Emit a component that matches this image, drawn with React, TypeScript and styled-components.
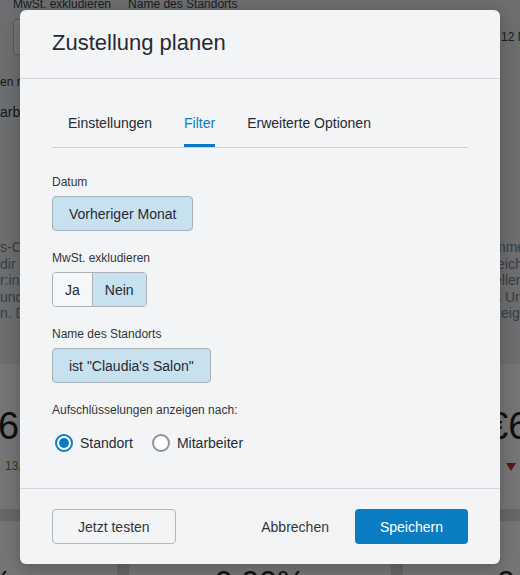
import React from "react";
import styled, { createGlobalStyle } from "styled-components";

const Global = createGlobalStyle`
  html, body { margin: 0; padding: 0; }
  body { font-family: "Liberation Sans", Arial, sans-serif; }
  * { box-sizing: border-box; }
`;

const Page = styled.div`
  position: relative;
  width: 520px;
  height: 575px;
  overflow: hidden;
  background: #dfe1e4;
  font-family: "Liberation Sans", Arial, sans-serif;
`;

const TopPanel = styled.div`
  background: #eef0f2;
  height: 365px;
  padding-top: 1px;
  margin-top: -1px;
`;

const FilterLabels = styled.div`
  display: flex;
  gap: 17px;
  padding-left: 13px;
  margin-top: -3px;
  font-size: 12px;
  line-height: 14px;
  color: #3e434a;
  white-space: nowrap;
`;

const FilterRow = styled.div`
  display: flex;
  justify-content: space-between;
  align-items: center;
  margin-top: 8px;
`;

const SelectBox = styled.div`
  width: 110px;
  height: 36px;
  margin-left: 13px;
  background: #fff;
  border: 1px solid #c2c6cb;
  border-radius: 4px;
`;

const SideNote = styled.div`
  width: 19px;
  white-space: nowrap;
  font-size: 12px;
  color: #3e434a;
`;

const SmallLine = styled.div<{ $mt: number; $size: number }>`
  margin-top: ${(p) => p.$mt}px;
  font-size: ${(p) => p.$size}px;
  line-height: ${(p) => p.$size + 2}px;
  color: #30343b;
  white-space: nowrap;
`;

const Paragraphs = styled.div`
  display: flex;
  justify-content: space-between;
  margin-top: 119px;
  font-size: 14px;
  line-height: 16.5px;
  color: #7c8597;
  white-space: nowrap;
`;

const RightColumn = styled.div`
  width: 26px;
`;

const CardRow = styled.div<{ $cols: string; $height: number; $mt: number }>`
  display: grid;
  grid-template-columns: ${(p) => p.$cols};
  gap: 12px;
  height: ${(p) => p.$height}px;
  margin-top: ${(p) => p.$mt}px;
`;

const Card = styled.div<{ $pl: number; $pt: number; $align?: string }>`
  background: #fff;
  padding: ${(p) => p.$pt}px 0 0 ${(p) => p.$pl}px;
  text-align: ${(p) => p.$align || "left"};
  white-space: nowrap;
  overflow: visible;
`;

const BigNumber = styled.div<{ $size: number; $ml?: number }>`
  font-size: ${(p) => p.$size}px;
  line-height: ${(p) => p.$size}px;
  color: #1f2329;
  margin-left: ${(p) => p.$ml || 0}px;
`;

const Delta = styled.div<{ $color: string; $ml: number }>`
  margin-top: 14px;
  margin-left: ${(p) => p.$ml}px;
  font-size: 12px;
  line-height: 14px;
  color: ${(p) => p.$color};
`;

const DownTriangle = styled.span`
  display: inline-block;
  width: 0;
  height: 0;
  border-left: 5px solid transparent;
  border-right: 5px solid transparent;
  border-top: 8px solid #c0392b;
  vertical-align: middle;
`;

const Overlay = styled.div`
  position: absolute;
  inset: 0;
  background: rgba(0, 0, 0, 0.54);
  display: flex;
  justify-content: center;
  align-items: flex-start;
  padding-top: 10px;
`;

const Modal = styled.div`
  width: 480px;
  height: 554px;
  background: #f3f4f6;
  border-radius: 6px;
  box-shadow: 0 4px 18px rgba(0, 0, 0, 0.25);
  display: flex;
  flex-direction: column;
  overflow: hidden;
  color: #262a33;
`;

const Header = styled.div`
  height: 69px;
  padding: 0 32px 2px;
  border-bottom: 1px solid #d4d6da;
  display: flex;
  align-items: center;
`;

const Title = styled.h2`
  margin: 0;
  font-size: 22px;
  font-weight: 400;
  color: #262a33;
`;

const Body = styled.div`
  flex: 1;
  padding: 24px 32px 0;
`;

const Tabs = styled.div`
  display: flex;
  border-bottom: 1px solid #cfd2d6;
`;

const Tab = styled.div<{ $active?: boolean }>`
  margin: 0 16px;
  padding: 12px 0 13px;
  font-size: 14px;
  line-height: 16px;
  color: ${(p) => (p.$active ? "#0b7bc1" : "#262a33")};
  border-bottom: 3px solid ${(p) => (p.$active ? "#0b7bc1" : "transparent")};
  cursor: pointer;
`;

const Form = styled.div`
  display: flex;
  flex-direction: column;
  gap: 20px;
  margin-top: 27px;
`;

const Field = styled.div`
  display: flex;
  flex-direction: column;
  align-items: flex-start;
`;

const Label = styled.div<{ $mb?: number }>`
  font-size: 12px;
  line-height: 14px;
  color: #30343b;
  margin-bottom: ${(p) => (p.$mb ?? 7)}px;
`;

const Chip = styled.button`
  height: 35px;
  padding: 0 16px;
  border: 1px solid #a7b1b9;
  border-radius: 4px;
  background: #c8e1ee;
  font-family: inherit;
  font-size: 14px;
  color: #262a33;
  display: inline-flex;
  align-items: center;
  cursor: pointer;
`;

const Segmented = styled.div`
  display: inline-flex;
  height: 35px;
  border: 1px solid #aab1b8;
  border-radius: 4px;
  overflow: hidden;
`;

const Segment = styled.button<{ $active?: boolean; $divider?: boolean }>`
  padding: 0 12px;
  border: none;
  border-left: ${(p) => (p.$divider ? "1px solid #aab1b8" : "none")};
  background: ${(p) => (p.$active ? "#c8e1ee" : "#f6f7f8")};
  font-family: inherit;
  font-size: 14px;
  color: #262a33;
  cursor: pointer;
`;

const RadioGroup = styled.div`
  display: flex;
  gap: 16px;
`;

const RadioOption = styled.label`
  display: flex;
  align-items: center;
  gap: 7px;
  font-size: 14px;
  color: #262a33;
  cursor: pointer;
`;

const RadioCircle = styled.span<{ $checked?: boolean }>`
  width: 18px;
  height: 18px;
  margin-left: 3px;
  border-radius: 50%;
  border: 2px solid ${(p) => (p.$checked ? "#0b7bc1" : "#8e9399")};
  background: #fff;
  display: flex;
  align-items: center;
  justify-content: center;
  &::after {
    content: "";
    width: 10px;
    height: 10px;
    border-radius: 50%;
    background: ${(p) => (p.$checked ? "#0b7bc1" : "transparent")};
  }
`;

const Footer = styled.div`
  border-top: 1px solid #d4d6da;
  padding: 20px 32px;
  display: flex;
  justify-content: space-between;
  align-items: center;
`;

const Actions = styled.div`
  display: flex;
  align-items: center;
`;

const ButtonBase = styled.button`
  height: 35px;
  border-radius: 4px;
  font-family: inherit;
  font-size: 14px;
  cursor: pointer;
`;

const SecondaryButton = styled(ButtonBase)`
  padding: 0 25px;
  border: 1px solid #b3b8bd;
  background: transparent;
  color: #30343b;
`;

const LinkButton = styled(ButtonBase)`
  padding: 0 26px;
  border: none;
  background: transparent;
  color: #30343b;
`;

const PrimaryButton = styled(ButtonBase)`
  padding: 0 25px;
  border: none;
  background: #0a7dc2;
  color: #fff;
`;

export default function App() {
  return (
    <>
      <Global />
      <Page>
        <TopPanel>
          <FilterLabels>
            <span>MwSt. exkludieren</span>
            <span>Name des Standorts</span>
          </FilterLabels>
          <FilterRow>
            <SelectBox />
            <SideNote>12 März</SideNote>
          </FilterRow>
          <SmallLine $mt={20} $size={12}>en nach</SmallLine>
          <SmallLine $mt={15} $size={14}>arbeiter</SmallLine>
          <Paragraphs>
            <div>
              <div>s-Center</div>
              <div>dir das</div>
              <div>r:innen</div>
              <div>und</div>
              <div>n. Die</div>
            </div>
            <RightColumn>
              <div>mmen</div>
              <div>leicht</div>
              <div>ellen</div>
              <div>s Umsatz</div>
              <div>zeigen</div>
            </RightColumn>
          </Paragraphs>
        </TopPanel>
        <CardRow $cols="1fr 254px" $height={145} $mt={0}>
          <Card $pl={0} $pt={43}>
            <BigNumber $size={38} $ml={-2}>6</BigNumber>
            <Delta $color="#3f8f2a" $ml={5}>13,4 %</Delta>
          </Card>
          <Card $pl={221} $pt={43}>
            <BigNumber $size={38}>€6</BigNumber>
            <Delta $color="#c0392b" $ml={19}>
              <DownTriangle />
            </Delta>
          </Card>
        </CardRow>
        <CardRow $cols="117px 1fr 117px" $height={60} $mt={12}>
          <Card $pl={0} $pt={45}>
            <BigNumber $size={32} $ml={-16}>%</BigNumber>
          </Card>
          <Card $pl={0} $pt={45} $align="center">
            <BigNumber $size={32}>0,00%</BigNumber>
          </Card>
          <Card $pl={94} $pt={45}>
            <BigNumber $size={32}>0,00%</BigNumber>
          </Card>
        </CardRow>

        <Overlay>
          <Modal role="dialog" aria-label="Zustellung planen">
            <Header>
              <Title>Zustellung planen</Title>
            </Header>
            <Body>
              <Tabs>
                <Tab>Einstellungen</Tab>
                <Tab $active>Filter</Tab>
                <Tab>Erweiterte Optionen</Tab>
              </Tabs>
              <Form>
                <Field>
                  <Label>Datum</Label>
                  <Chip>Vorheriger Monat</Chip>
                </Field>
                <Field>
                  <Label>MwSt. exkludieren</Label>
                  <Segmented>
                    <Segment>Ja</Segment>
                    <Segment $active $divider>
                      Nein
                    </Segment>
                  </Segmented>
                </Field>
                <Field>
                  <Label>Name des Standorts</Label>
                  <Chip>ist "Claudia's Salon"</Chip>
                </Field>
                <Field>
                  <Label $mb={17}>Aufschlüsselungen anzeigen nach:</Label>
                  <RadioGroup>
                    <RadioOption>
                      <RadioCircle $checked />
                      Standort
                    </RadioOption>
                    <RadioOption>
                      <RadioCircle />
                      Mitarbeiter
                    </RadioOption>
                  </RadioGroup>
                </Field>
              </Form>
            </Body>
            <Footer>
              <SecondaryButton>Jetzt testen</SecondaryButton>
              <Actions>
                <LinkButton>Abbrechen</LinkButton>
                <PrimaryButton>Speichern</PrimaryButton>
              </Actions>
            </Footer>
          </Modal>
        </Overlay>
      </Page>
    </>
  );
}
